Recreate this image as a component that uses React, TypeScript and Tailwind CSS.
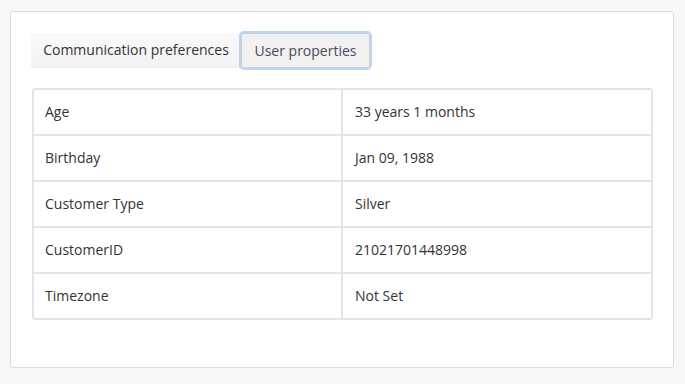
import React from 'react';

const rows: [string, string][] = [
  ['Age', '33 years 1 months'],
  ['Birthday', 'Jan 09, 1988'],
  ['Customer Type', 'Silver'],
  ['CustomerID', '21021701448998'],
  ['Timezone', 'Not Set'],
];

export default function App() {
  return (
    <div className="h-[384px] w-[685px] bg-[#f7f7f7] pl-[10px] pt-[11px] pr-[11px] text-[#333] font-['Open_Sans',sans-serif]">
      <div className="h-[357px] rounded-[3px] border border-[#dcdcdc] bg-white px-[20px] pt-[21px]">
        <div className="flex items-center">
          <button className="h-[35px] w-[210px] border-b border-[#eeeeee] bg-gradient-to-b from-[#f9f9f9] to-[#f3f3f3] pb-[1px] text-[14px] text-[#333]">
            Communication preferences
          </button>
          <button className="h-[35px] w-[129px] rounded-[3px] border border-[#cfcfcf] bg-[#f1f1f1] pb-[1px] text-[14px] text-[#4a4a5c] outline-2 outline-[#b8d5f4]">
            User properties
          </button>
        </div>
        <div className="mt-[20px] ml-[1px] w-[621px] overflow-hidden rounded-[3px] border-2 border-[#e2e4e8]">
          {rows.map(([k, v], i) => (
            <div key={k} className={`grid grid-cols-[309px_1fr] ${i > 0 ? 'h-[46px] border-t-2 border-[#e2e4e8]' : 'h-[44px]'}`}>
              <div className="flex items-center border-r-2 border-[#e2e4e8] pb-[2px] pl-[11px] text-[14px] text-[#333]">{k}</div>
              <div className="flex items-center pb-[2px] pl-[12px] text-[14px] text-[#333]">{v}</div>
            </div>
          ))}
        </div>
      </div>
    </div>
  );
}
